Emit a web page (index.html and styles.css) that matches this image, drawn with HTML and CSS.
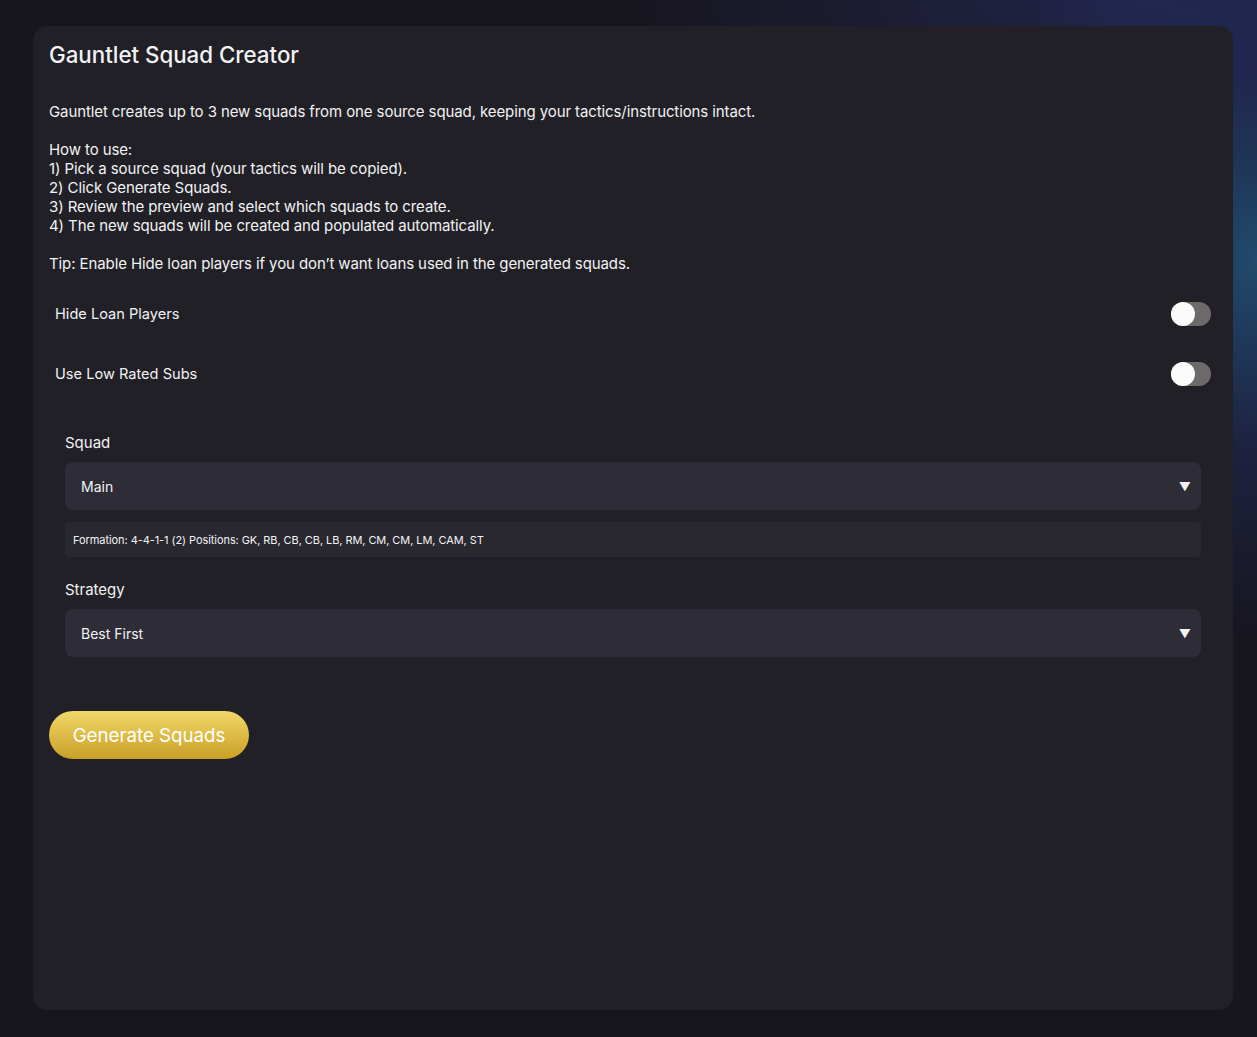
FILE: index.html
```html
<!DOCTYPE html>
<html lang="en">
<head>
    <meta charset="UTF-8">
    <meta name="viewport" content="width=device-width, initial-scale=1.0">
    <title>Gauntlet Squad Creator</title>
    <link rel="stylesheet" href="styles.css">
</head>
<body>
    <div class="panel">
        <h2 class="panel-title">Gauntlet Squad Creator</h2>

        <div class="intro">Gauntlet creates up to 3 new squads from one source squad, keeping your tactics/instructions intact.

How to use:
1) Pick a source squad (your tactics will be copied).
2) Click Generate Squads.
3) Review the preview and select which squads to create.
4) The new squads will be created and populated automatically.

Tip: Enable Hide loan players if you don’t want loans used in the generated squads.</div>

        <div class="toggle-row">
            <span>Hide Loan Players</span>
            <label class="toggle">
                <input type="checkbox">
                <span class="track"></span>
            </label>
        </div>
        <div class="toggle-row">
            <span>Use Low Rated Subs</span>
            <label class="toggle">
                <input type="checkbox">
                <span class="track"></span>
            </label>
        </div>

        <div class="field">
            <label class="field-label">Squad</label>
            <div class="select">
                <span>Main</span>
                <span class="caret">▼</span>
            </div>
            <div class="formation">Formation: 4-4-1-1 (2) Positions: GK, RB, CB, CB, LB, RM, CM, CM, LM, CAM, ST</div>
        </div>

        <div class="field">
            <label class="field-label">Strategy</label>
            <div class="select">
                <span>Best First</span>
                <span class="caret">▼</span>
            </div>
        </div>

        <button class="generate-btn">Generate Squads</button>
    </div>
</body>
</html>
```

FILE: styles.css
```css
body {
    margin: 0;
    min-height: 1037px;
    font-family: Inter, "Noto Sans", sans-serif;
    color: #f2f2f4;
    background:
        radial-gradient(ellipse 300px 380px at 100% 25%, rgba(40, 110, 160, 0.6), rgba(40, 55, 125, 0.35) 50%, rgba(23, 22, 33, 0) 100%),
        radial-gradient(ellipse 500px 160px at 90% 0%, rgba(40, 45, 100, 0.6), rgba(23, 22, 33, 0) 100%),
        #17161f;
    padding: 26px 24px 27px 33px;
    box-sizing: border-box;
}
.panel {
    background: #212026;
    border-radius: 14px;
    height: 984px;
    padding: 14px 16px;
    box-sizing: border-box;
}
.panel-title {
    margin: 0;
    font-size: 22.3px;
    font-weight: 500;
    line-height: 30px;
}
.intro {
    white-space: pre-line;
    font-size: 15px;
    line-height: 19px;
    margin: 32px 0 11px;
    letter-spacing: -0.1px;
}
.toggle-row {
    display: flex;
    align-items: center;
    justify-content: space-between;
    height: 60px;
    padding: 0 6px;
    font-size: 14.6px;
}
.toggle {
    position: relative;
    width: 40px;
    height: 24px;
}
.toggle input {
    display: none;
}
.track {
    position: absolute;
    inset: 0;
    background: #6e6a6b;
    border-radius: 12px;
}
.track::before {
    content: "";
    position: absolute;
    left: 0;
    top: 0;
    width: 24px;
    height: 24px;
    border-radius: 50%;
    background: #fbfbfb;
}
.field {
    padding: 0 16px;
    margin-top: 29px;
}
.field + .field {
    margin-top: 23px;
}
.field-label {
    display: block;
    font-size: 15px;
    line-height: 20px;
    margin-bottom: 9px;
}
.select {
    display: flex;
    align-items: center;
    justify-content: space-between;
    height: 48px;
    padding: 0 10px 0 16px;
    background: #2d2c37;
    border-radius: 8px;
    font-size: 14px;
}
.caret {
    font-size: 12px;
}
.formation {
    margin-top: 12px;
    height: 35px;
    display: flex;
    align-items: center;
    padding: 0 8px;
    background: #29282f;
    border-radius: 4px;
    font-size: 11px;
    letter-spacing: -0.07px;
}
.generate-btn {
    margin-top: 54px;
    width: 200px;
    height: 48px;
    border: none;
    border-radius: 24px;
    background: linear-gradient(#f2d76a, #c9a026);
    color: #fff;
    font-family: inherit;
    font-size: 18.7px;
    cursor: pointer;
}
```
